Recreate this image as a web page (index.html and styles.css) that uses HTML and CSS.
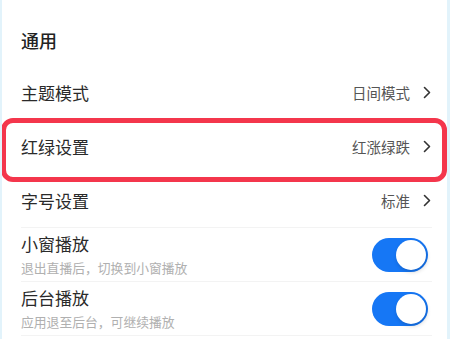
FILE: index.html
```html
<!DOCTYPE html>
<html lang="zh-CN">
<head>
  <meta charset="UTF-8" />
  <title>通用设置</title>
  <link rel="stylesheet" href="styles.css">
</head>
<body>
  <div class="page">
    <h2 class="section-title">通用</h2>

    <div class="list">
      <div class="row">
        <span class="label">主题模式</span>
        <span class="value">日间模式</span>
        <svg class="chev" width="8" height="13" viewBox="0 0 8 13"><path d="M1.5 1.5 L6.5 6.5 L1.5 11.5" fill="none" stroke="#333" stroke-width="1.6" stroke-linecap="round" stroke-linejoin="round"/></svg>
      </div>
      <div class="row marked">
        <span class="label">红绿设置</span>
        <span class="value">红涨绿跌</span>
        <svg class="chev" width="8" height="13" viewBox="0 0 8 13"><path d="M1.5 1.5 L6.5 6.5 L1.5 11.5" fill="none" stroke="#333" stroke-width="1.6" stroke-linecap="round" stroke-linejoin="round"/></svg>
        <div class="highlight"></div>
      </div>
      <div class="row">
        <span class="label">字号设置</span>
        <span class="value">标准</span>
        <svg class="chev" width="8" height="13" viewBox="0 0 8 13"><path d="M1.5 1.5 L6.5 6.5 L1.5 11.5" fill="none" stroke="#333" stroke-width="1.6" stroke-linecap="round" stroke-linejoin="round"/></svg>
      </div>
      <div class="row">
        <div class="text">
          <div class="label">小窗播放</div>
          <div class="sub">退出直播后，切换到小窗播放</div>
        </div>
        <div class="toggle on"><div class="knob"></div></div>
      </div>
      <div class="row">
        <div class="text">
          <div class="label">后台播放</div>
          <div class="sub">应用退至后台，可继续播放</div>
        </div>
        <div class="toggle on"><div class="knob"></div></div>
      </div>
    </div>
  </div>
</body>
</html>
```

FILE: styles.css
```css
body {
  margin: 0;
  background: #fff;
  font-family: "Noto Sans CJK SC", "Noto Sans", sans-serif;
  color: #222;
}

.page {
  height: 339px;
  overflow: hidden;
  border-left: 2px solid #e2f3fb;
  border-right: 3px solid #e2f3fb;
  box-sizing: border-box;
}

.section-title {
  margin: 0;
  padding: 28px 0 0 19px;
  height: 38px;
  font-size: 18px;
  font-weight: 500;
  line-height: 24px;
  color: #222;
}

.list {
  padding: 0 15px 0 19px;
}

.row {
  position: relative;
  display: flex;
  align-items: center;
  height: 53px;
  border-bottom: 1px solid #f3f3f3;
}

.row:first-child,
.row.marked {
  border-bottom-color: #fff;
}

.row .label {
  font-size: 17px;
  line-height: 22px;
  color: #2a2a2a;
}

.row > .label {
  flex: 1;
}

.value {
  font-size: 14.5px;
  color: #555;
  margin-right: 13px;
}

.chev {
  display: block;
  margin-right: 1px;
}

.text {
  flex: 1;
}

.sub {
  font-size: 12.8px;
  color: #b0b0b0;
  margin-top: 5px;
  line-height: 16px;
}

.toggle {
  width: 56px;
  height: 34px;
  border-radius: 17px;
  background: #dcdcdc;
  position: relative;
  margin-right: 4px;
}

.toggle.on {
  background: #1677f5;
}

.knob {
  position: absolute;
  top: 2px;
  right: 2px;
  width: 30px;
  height: 30px;
  border-radius: 50%;
  background: #fff;
  box-shadow: 1px 2px 4px rgba(0, 0, 0, 0.18);
}

/* red annotation box */
.highlight {
  position: absolute;
  top: -2px;
  bottom: -9px;
  left: -20px;
  right: -15px;
  border: 5px solid #f4364c;
  border-radius: 12px;
  pointer-events: none;
}
```
